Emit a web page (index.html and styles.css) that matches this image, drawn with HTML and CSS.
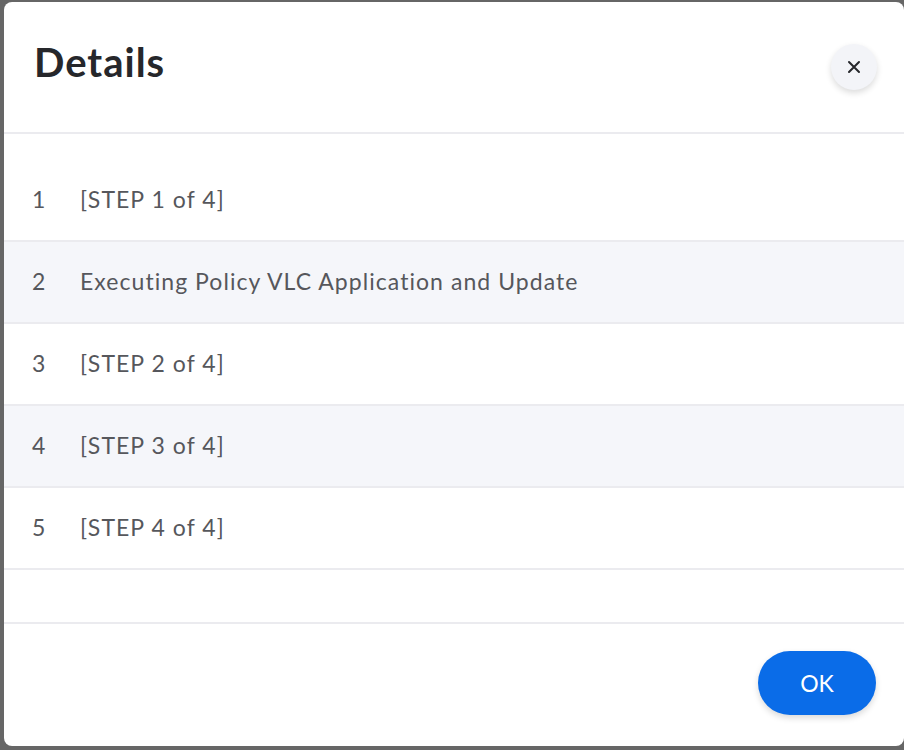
FILE: index.html
```html
<!DOCTYPE html>
<html>
<head>
<meta charset="utf-8">
<link rel="stylesheet" href="styles.css">
</head>
<body>
<div class="modal">
  <div class="modal-header">
    <h1 class="title">Details</h1>
    <button class="close-btn" aria-label="Close">
      <svg width="14" height="14" viewBox="0 0 14 14"><path d="M2 2 L12 12 M12 2 L2 12" stroke="#26272b" stroke-width="2" stroke-linecap="round"/></svg>
    </button>
  </div>
  <div class="modal-body">
    <div class="row"><span class="num">1</span><span class="text">[STEP 1 of 4]</span></div>
    <div class="row alt"><span class="num">2</span><span class="text">Executing Policy VLC Application and Update</span></div>
    <div class="row"><span class="num">3</span><span class="text">[STEP 2 of 4]</span></div>
    <div class="row alt"><span class="num">4</span><span class="text">[STEP 3 of 4]</span></div>
    <div class="row"><span class="num">5</span><span class="text">[STEP 4 of 4]</span></div>
  </div>
  <div class="modal-footer">
    <button class="ok-btn">OK</button>
  </div>
</div>
</body>
</html>
```
FILE: styles.css
```css
html, body {
  margin: 0;
  padding: 0;
  background: #666666;
  height: 100%;
  overflow: hidden;
}
body {
  font-family: "Lato", "Open Sans", sans-serif;
}
.modal {
  margin: 2px 0 0 4px;
  width: 900px;
  height: 744px;
  background: #ffffff;
  border-radius: 8px;
  display: flex;
  flex-direction: column;
  box-sizing: border-box;
  overflow: hidden;
}
.modal-header {
  height: 132px;
  flex: none;
  box-sizing: border-box;
  border-bottom: 2px solid #ebebef;
  display: flex;
  align-items: center;
  justify-content: space-between;
  padding: 0 27px 0 30px;
}
.title {
  margin: 0 0 10px 0;
  font-size: 40px;
  font-weight: 700;
  color: #26272b;
  letter-spacing: 1px;
}
.close-btn {
  width: 46px;
  height: 46px;
  border-radius: 50%;
  border: none;
  background: #f3f4f8;
  box-shadow: 0 3px 6px rgba(0,0,0,0.14);
  display: flex;
  align-items: center;
  justify-content: center;
  padding: 0;
  cursor: pointer;
}
.modal-body {
  flex: 1;
  padding-top: 26px;
}
.row {
  height: 82px;
  box-sizing: border-box;
  border-bottom: 2px solid #ebebef;
  display: flex;
  align-items: center;
  padding-left: 28px;
  padding-bottom: 2px;
  color: #56575c;
  font-size: 23px;
  letter-spacing: 1.05px;
}
.row.alt {
  background: #f5f6fa;
}
.num {
  width: 48px;
  flex: none;
}
.modal-footer {
  height: 124px;
  flex: none;
  box-sizing: border-box;
  border-top: 2px solid #ebebef;
  display: flex;
  align-items: center;
  justify-content: flex-end;
  padding-right: 28px;
  padding-bottom: 4px;
}
.ok-btn {
  width: 118px;
  height: 64px;
  border-radius: 32px;
  border: none;
  background: #0a6ce8;
  color: #ffffff;
  font-family: "Lato", "Open Sans", sans-serif;
  font-size: 23px;
  box-shadow: 0 3px 6px rgba(0,0,0,0.15);
  cursor: pointer;
}
```
